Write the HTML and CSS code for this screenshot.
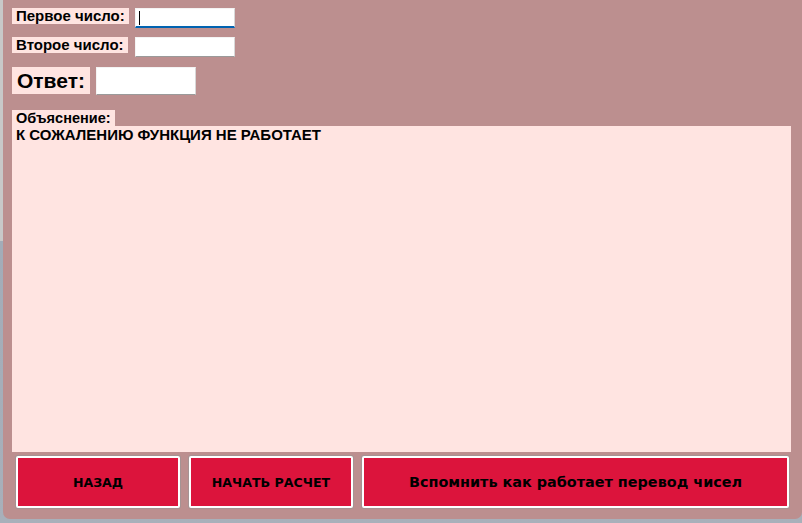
FILE: index.html
```html
<!DOCTYPE html>
<html lang="ru">
<head>
<meta charset="utf-8">
<title>Перевод чисел</title>
<link rel="stylesheet" href="styles.css">
</head>
<body>
<div class="desktop">
  <div class="window">
    <div class="fields">
      <span class="label">Первое число:</span>
      <div class="textbox focused"><span class="caret"></span></div>
      <span class="label">Второе число:</span>
      <div class="textbox"></div>
    </div>
    <div class="answer-row">
      <span class="label big">Ответ:</span>
      <div class="textbox tall"></div>
    </div>
    <span class="label expl">Объяснение:</span>
    <div class="explanation">К СОЖАЛЕНИЮ ФУНКЦИЯ НЕ РАБОТАЕТ</div>
    <div class="buttons">
      <button class="btn small">НАЗАД</button>
      <button class="btn small">НАЧАТЬ РАСЧЕТ</button>
      <button class="btn wide">Вспомнить как работает перевод чисел</button>
    </div>
  </div>
</div>
</body>
</html>
```

FILE: styles.css
```css
html, body {
  margin: 0;
  padding: 0;
  width: 802px;
  height: 523px;
  overflow: hidden;
}

.desktop {
  width: 802px;
  height: 523px;
  box-sizing: border-box;
  padding-left: 3px;
  background: linear-gradient(to bottom, #c8c8c8 0, #c8c8c8 241px, #a2acb8 241px, #a8b0ba 100%);
}

.window {
  width: 799px;
  height: 519px;
  box-sizing: border-box;
  background: #bc8f8f;
  border-radius: 0 0 7px 7px;
  padding: 8px 0 0 9px;
  display: flex;
  flex-direction: column;
  align-items: flex-start;
  font-family: "Liberation Sans", Arial, sans-serif;
  color: #000;
}

.fields {
  display: grid;
  grid-template-columns: 123px 100px;
  row-gap: 9px;
  align-items: start;
}

.label {
  background: #ffe4e1;
  font-weight: bold;
  font-size: 15px;
  line-height: 16px;
  height: 16px;
  padding: 0 4px;
  justify-self: start;
  white-space: nowrap;
}

.textbox {
  width: 100px;
  height: 20px;
  box-sizing: border-box;
  background: #fff;
  border: 1px solid #f4f4f4;
  border-right-color: #d8d8d8;
  border-bottom-color: #9a9a9a;
  position: relative;
}

.textbox.focused {
  border-bottom: 2px solid #0063b1;
}

.caret {
  position: absolute;
  left: 3px;
  top: 2px;
  width: 1px;
  height: 14px;
  background: #000;
}

.answer-row {
  display: flex;
  align-items: flex-start;
  gap: 6px;
  margin-top: 10px;
}

.label.big {
  font-size: 21px;
  height: 27px;
  line-height: 28px;
  padding: 0 5px;
}

.textbox.tall {
  height: 28px;
}

.label.expl {
  margin-top: 15px;
  font-size: 14.5px;
  padding: 0 4px;
}

.explanation {
  width: 779px;
  height: 326px;
  box-sizing: border-box;
  background: #ffe4e1;
  padding: 0 4px;
  font-size: 15px;
  font-weight: bold;
  line-height: 17px;
  white-space: nowrap;
}

.buttons {
  display: flex;
  gap: 9px;
  margin-top: 4px;
  margin-left: 4px;
}

.btn {
  height: 52px;
  box-sizing: border-box;
  background: #dc143c;
  border: 2px solid #fff;
  border-radius: 2px;
  box-shadow: 0 0 0 1px rgba(150, 150, 150, 0.6);
  font-family: "DejaVu Sans", Verdana, sans-serif;
  font-weight: bold;
  color: #000;
  padding: 0;
  margin: 0;
}

.btn.small {
  width: 164px;
  font-size: 12.6px;
}

.btn.wide {
  width: 427px;
  font-size: 14.4px;
}
```
